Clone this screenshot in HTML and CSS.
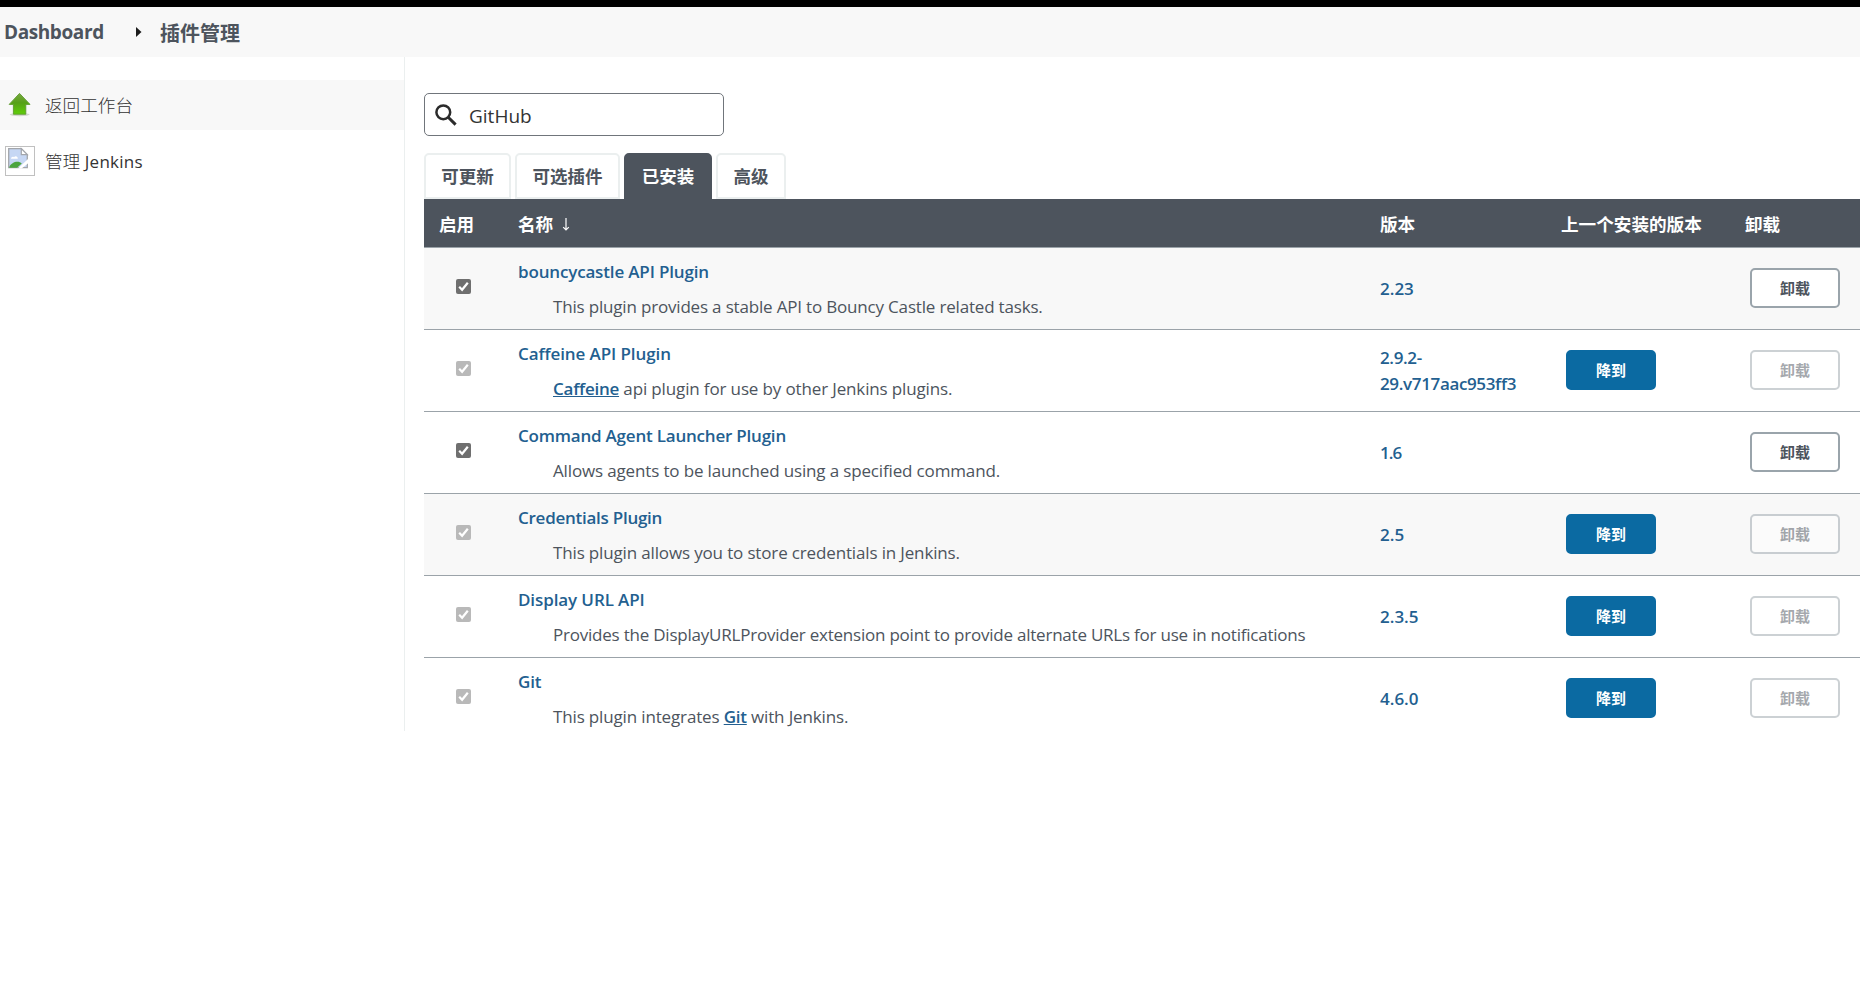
FILE: index.html
```html
<!DOCTYPE html>
<html lang="zh-CN">
<head>
<meta charset="utf-8">
<title>插件管理</title>
<link rel="stylesheet" href="styles.css">
</head>
<body>
<header class="topbar"></header>
<nav class="crumbs">
  <a class="crumb crumb-home">Dashboard</a>
  <svg class="crumb-arrow" width="6" height="10" viewBox="0 0 6 10"><path d="M0 0l5.5 5L0 10z" fill="#1c1c1c"/></svg>
  <a class="crumb">插件管理</a>
</nav>
<div class="page">
  <aside class="side">
    <a class="task task-active">
      <svg class="task-icon" width="30" height="30" viewBox="0 0 30 30">
        <defs><linearGradient id="g" x1="0" y1="0" x2="0" y2="1"><stop offset="0" stop-color="#7aa843"/><stop offset=".45" stop-color="#56a017"/><stop offset="1" stop-color="#5fce08"/></linearGradient></defs>
        <ellipse cx="14.7" cy="24.6" rx="10" ry="1.6" fill="#d2d6ce"/>
        <path d="M14.5 3.4L25 14.4h-4.2v9.8H8.4v-9.8H4.2z" fill="url(#g)" stroke="#5c9a2c" stroke-width=".9" stroke-linejoin="round"/>
      </svg>
      <span class="task-text">返回工作台</span>
    </a>
    <a class="task">
      <svg class="task-icon" width="30" height="30" viewBox="0 0 30 30">
        <rect x=".5" y=".5" width="29" height="29" fill="#fff" stroke="#c0c0c0"/>
        <path d="M3.7 2.7h12.6l6 6v13H3.7z" fill="#c6d7f4" stroke="#a3a6ab" stroke-width="1.3"/>
        <path d="M6 12.8c0-2 2-2.6 3-1.6 1.2-2 4-1 3.8 1.6z" fill="#fff"/>
        <path d="M4.3 21c2-5 9-7 12.5-3.6L12 21.8H4.3z" fill="#4ba43e"/>
        <path d="M16.3 2.7v6h6z" fill="#fff" stroke="#a3a6ab" stroke-width="1.2"/>
        <path d="M23.5 12.5L13 22.5h3.6l6.9-5.5z" fill="#fff"/>
      </svg>
      <span class="task-text">管理 <span class="jenkins">Jenkins</span></span>
    </a>
  </aside>
  <main class="main">
    <div class="search">
      <svg width="22" height="22" viewBox="0 0 22 22" fill="none" stroke="#2b2b2b"><circle cx="8.3" cy="8.3" r="6.9" stroke-width="2.5"/><path d="M13.2 13.2l7.4 7.4" stroke-width="3"/></svg>
      <span class="query">GitHub</span>
    </div>
    <div class="tabs">
      <a class="tab tab-updates">可更新</a>
      <a class="tab tab-available">可选插件</a>
      <a class="tab tab-installed">已安装</a>
      <a class="tab tab-advanced">高级</a>
    </div>
    <div class="plugins">
      <div class="row head">
        <span>启用</span><span>名称 <svg class="sort" width="8" height="13" viewBox="0 0 8 13" fill="none" stroke="#fff" stroke-width="1.2"><path d="M4 0v12M1.2 9.2L4 12l2.8-2.8"/></svg></span><span>版本</span><span>上一个安装的版本</span><span>卸载</span>
      </div>
      <div class="row alt bouncycastle">
        <span class="check"><svg viewBox="0 0 15 15"><path d="M3.2 7.8l2.9 3L11.8 3.8"/></svg></span>
        <div class="info"><a class="name">bouncycastle API Plugin</a><p class="desc">This plugin provides a stable API to Bouncy Castle related tasks.</p></div>
        <a class="version">2.23</a><span></span><span class="btn">卸载</span>
      </div>
      <div class="row caffeine">
        <span class="check off"><svg viewBox="0 0 15 15"><path d="M3.2 7.8l2.9 3L11.8 3.8"/></svg></span>
        <div class="info"><a class="name">Caffeine API Plugin</a><p class="desc"><a class="link">Caffeine</a> api plugin for use by other Jenkins plugins.</p></div>
        <a class="version version-long">2.9.2-<br>29.v717aac953ff3</a><span class="btn primary">降到</span><span class="btn off">卸载</span>
      </div>
      <div class="row command-launcher">
        <span class="check"><svg viewBox="0 0 15 15"><path d="M3.2 7.8l2.9 3L11.8 3.8"/></svg></span>
        <div class="info"><a class="name">Command Agent Launcher Plugin</a><p class="desc">Allows agents to be launched using a specified command.</p></div>
        <a class="version version-short">1.6</a><span></span><span class="btn">卸载</span>
      </div>
      <div class="row alt credentials">
        <span class="check off"><svg viewBox="0 0 15 15"><path d="M3.2 7.8l2.9 3L11.8 3.8"/></svg></span>
        <div class="info"><a class="name">Credentials Plugin</a><p class="desc">This plugin allows you to store credentials in Jenkins.</p></div>
        <a class="version">2.5</a><span class="btn primary">降到</span><span class="btn off">卸载</span>
      </div>
      <div class="row display-url">
        <span class="check off"><svg viewBox="0 0 15 15"><path d="M3.2 7.8l2.9 3L11.8 3.8"/></svg></span>
        <div class="info"><a class="name">Display URL API</a><p class="desc">Provides the DisplayURLProvider extension point to provide alternate URLs for use in notifications</p></div>
        <a class="version">2.3.5</a><span class="btn primary">降到</span><span class="btn off">卸载</span>
      </div>
      <div class="row last">
        <span class="check off"><svg viewBox="0 0 15 15"><path d="M3.2 7.8l2.9 3L11.8 3.8"/></svg></span>
        <div class="info"><a class="name">Git</a><p class="desc">This plugin integrates <a class="link">Git</a> with Jenkins.</p></div>
        <a class="version">4.6.0</a><span class="btn primary">降到</span><span class="btn off">卸载</span>
      </div>
    </div>
  </main>
</div>
</body>
</html>
```
FILE: styles.css
```css
* { box-sizing: border-box; }
body {
  margin: 0;
  background: #fff;
  color: #4d545d;
  font-family: "Open Sans", "Noto Sans CJK SC", sans-serif;
  font-size: 17px;
}
.topbar { height: 7px; background: #000; }
.crumbs {
  display: flex;
  align-items: center;
  height: 50px;
  padding-left: 4px;
  background: #f8f8f8;
  color: #4d545d;
  font-size: 20px;
  font-weight: 700;
}
.crumb-home { width: 132px; font-size: 19px; letter-spacing: -.4px; }
.crumb-arrow { margin-right: 18px; }
.page { display: flex; height: 674px; overflow: hidden; }
.side { width: 405px; padding-top: 23px; border-right: 1px solid #ebefef; }
.task {
  display: flex;
  align-items: center;
  gap: 10px;
  height: 50px;
  margin-bottom: 6px;
  padding-left: 5px;
  color: #333;
  font-size: 17.6px;
}
.task-active { background: #f8f8f8; }
.task-text { padding-bottom: 2px; font-weight: 300; }
.jenkins { font-size: 17px; font-weight: 400; letter-spacing: .25px; }
.main { flex: 1; padding: 36px 0 0 19px; }
.search {
  display: flex;
  align-items: center;
  gap: 12px;
  width: 300px;
  height: 43px;
  padding-left: 10px;
  border: 1px solid #70757b;
  border-radius: 5px;
  color: #333;
  font-size: 19px;
}
.query { padding-top: 2px; }
.tabs { display: flex; gap: 4px; height: 46px; margin-top: 17px; }
.tab {
  display: flex;
  align-items: center;
  justify-content: center;
  padding-bottom: 2px;
  border: 2px solid #ebefef;
  border-radius: 5px 5px 0 0;
  color: #4d545d;
  font-size: 17.5px;
  font-weight: 700;
}
.tab-updates { width: 87px; }
.tab-available { width: 105px; }
.tab-installed { width: 88px; border-color: #4d545d; background: #4d545d; color: #fff; }
.tab-advanced { width: 70px; }
.row {
  display: grid;
  grid-template-columns: 94px 862px 186px 184px 110px;
  align-items: center;
  height: 82px;
  border-bottom: 1px solid #9ba3a9;
}
.alt { background: #f8f8f8; }
.last { border-bottom-color: transparent; }
.head {
  grid-template-columns: 79px 862px 181px 184px 100px;
  height: 49px;
  padding-left: 15px;
  background: #4d545d;
  color: #fff;
  font-size: 17.6px;
  font-weight: 700;
}
.sort { margin-left: 4px; }
.check {
  width: 15px;
  height: 15px;
  margin: -4px 0 0 32px;
  border-radius: 2px;
  background: #6f6f6f;
}
.check svg { display: block; fill: none; stroke: #fff; stroke-width: 2.2; }
.check.off { background: #b9b9b9; }
.info { padding-top: 2px; }
.name {
  display: block;
  color: #235f90;
  font-weight: 600;
  letter-spacing: -.1px;
  line-height: 26px;
}
.desc {
  margin: 9px 0 0 35px;
  letter-spacing: -.15px;
  line-height: 26px;
}
.bouncycastle .name { letter-spacing: -.16px; }
.bouncycastle .desc { letter-spacing: -.18px; }
.caffeine .desc { letter-spacing: -.14px; }
.command-launcher .name { letter-spacing: -.21px; }
.credentials .name { letter-spacing: -.26px; }
.display-url .desc { letter-spacing: -.22px; }
.link { color: #235f90; font-weight: 600; letter-spacing: -.25px; text-decoration: underline; }
.version { color: #235f90; font-weight: 600; line-height: 26px; }
.version-long { letter-spacing: -.35px; }
.version-short { letter-spacing: -.9px; }
.btn {
  display: flex;
  align-items: center;
  justify-content: center;
  width: 90px;
  height: 40px;
  margin-top: -2px;
  border: 2px solid #9aa4ab;
  border-radius: 5px;
  background: #fff;
  color: #4d545d;
  font-size: 15px;
  font-weight: 600;
}
.btn.off { opacity: .5; }
.btn.primary { border-color: #0b6aa2; background: #0b6aa2; color: #fff; font-weight: 700; }
```
